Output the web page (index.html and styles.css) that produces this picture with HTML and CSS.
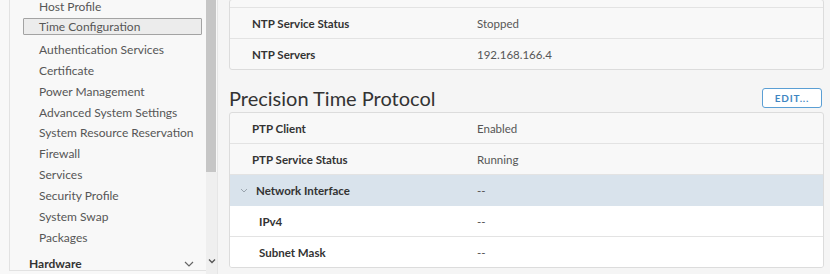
FILE: index.html
```
<!DOCTYPE html>
<html lang="en">
<head>
    <meta charset="UTF-8">
    <meta name="viewport" content="width=device-width, initial-scale=1.0">
    <title>Time Configuration</title>
    <link rel="stylesheet" href="styles.css">
</head>
<body>
    <div class="layout">
        <aside class="sidebar">
            <nav class="tree">
                <ul class="tree-list">
                    <li class="first">Host Profile</li>
                    <li class="selected"><span>Time Configuration</span></li>
                    <li>Authentication Services</li>
                    <li>Certificate</li>
                    <li>Power Management</li>
                    <li>Advanced System Settings</li>
                    <li>System Resource Reservation</li>
                    <li>Firewall</li>
                    <li>Services</li>
                    <li>Security Profile</li>
                    <li>System Swap</li>
                    <li>Packages</li>
                </ul>
                <div class="tree-group">
                    <span>Hardware</span>
                    <svg width="10" height="6" viewBox="0 0 10 6"><path d="M1 1l4 4 4-4" fill="none" stroke="#666" stroke-width="1.2"/></svg>
                </div>
            </nav>
            <div class="scrollbar">
                <div class="thumb"></div>
                <div class="track">
                    <svg width="8" height="6" viewBox="0 0 8 6"><path d="M1 1.5l3 3 3-3" fill="none" stroke="#555" stroke-width="1.3"/></svg>
                </div>
            </div>
        </aside>

        <main class="content">
            <section class="card card-top">
                <div class="row row-cut"></div>
                <div class="row"><span class="label">NTP Service Status</span><span class="value">Stopped</span></div>
                <div class="row"><span class="label">NTP Servers</span><span class="value">192.168.166.4</span></div>
            </section>

            <div class="section-head">
                <h2>Precision Time Protocol</h2>
                <button class="btn-edit">EDIT...</button>
            </div>

            <section class="card">
                <div class="row"><span class="label">PTP Client</span><span class="value">Enabled</span></div>
                <div class="row"><span class="label">PTP Service Status</span><span class="value">Running</span></div>
                <div class="row row-group">
                    <span class="label">
                        <svg class="caret" width="8" height="5" viewBox="0 0 8 5"><path d="M1 1l3 3 3-3" fill="none" stroke="#9aa4ad" stroke-width="1"/></svg>
                        Network Interface
                    </span>
                    <span class="value">--</span>
                </div>
                <div class="row row-sub"><span class="label">IPv4</span><span class="value">--</span></div>
                <div class="row row-sub"><span class="label">Subnet Mask</span><span class="value">--</span></div>
            </section>
        </main>
    </div>
</body>
</html>
```

FILE: styles.css
```
* {
    margin: 0;
    padding: 0;
    box-sizing: border-box;
}
body {
    background-color: #f5f5f5;
    font-family: Lato, "Noto Sans", sans-serif;
    font-size: 11.5px;
    color: #565656;
    overflow: hidden;
}
.layout {
    display: flex;
    height: 274px;
}

/* arbre de gauche */
.sidebar {
    display: flex;
    width: 218px;
    flex-shrink: 0;
    background-color: #f8f8f8;
}
.tree {
    width: 206px;
    border-left: 1px solid #e2e2e2;
    border-bottom: 1px solid #e2e2e2;
    margin-left: 9px;
    height: 271px;
    overflow: hidden;
    font-size: 12px;
}
.tree-list {
    list-style: none;
}
.tree-list li {
    height: 20.9px;
    line-height: 21px;
    padding-left: 29px;
    white-space: nowrap;
}
.tree-list li.first {
    height: 16px;
    line-height: 14px;
}
.tree-list li.selected {
    padding-left: 13px;
    padding-right: 4px;
}
.tree-list li.selected span {
    display: block;
    height: 17px;
    line-height: 15px;
    margin-top: 2px;
    padding-left: 15px;
    background-color: #ececec;
    border: 1px solid #a3a3a3;
    border-radius: 1px;
}
.tree-group {
    display: flex;
    align-items: center;
    justify-content: space-between;
    height: 26px;
    margin-top: 3px;
    padding-left: 19px;
    padding-right: 12px;
    font-weight: 700;
    color: #333;
}
.scrollbar {
    width: 12px;
    display: flex;
    flex-direction: column;
    border-right: 1px solid #e6e6e6;
}
.thumb {
    height: 172px;
    background-color: #c6c6c6;
    margin-right: 1px;
}
.track {
    flex: 1;
    background-color: #efefef;
    display: flex;
    align-items: flex-end;
    justify-content: center;
    padding-bottom: 10px;
}

/* contenu */
.content {
    flex: 1;
    padding: 0 6px 0 11px;
}
.card {
    border: 1px solid #dcdcdc;
    border-radius: 3px;
    background-color: #f8f8f8;
    overflow: hidden;
}
.card-top {
    margin-top: -1px;
}
.row {
    display: flex;
    align-items: center;
    height: 31px;
    border-bottom: 1px solid #e3e3e3;
}
.row:last-child {
    border-bottom: none;
    height: 30px;
}
.row.row-cut {
    height: 8px;
}
.label {
    width: 247px;
    padding-left: 22px;
    font-weight: 700;
    color: #333;
    display: flex;
    align-items: center;
}
.value {
    color: #565656;
}
.row-group {
    background-color: #d9e3ec;
    border-bottom: none;
}
.row-group .label {
    padding-left: 10px;
}
.caret {
    margin-right: 8px;
}
.row-sub {
    background-color: #fff;
}
.row-sub .label {
    padding-left: 29px;
}
.section-head {
    display: flex;
    align-items: center;
    justify-content: space-between;
    padding: 18px 2px 4px 0;
}
.section-head h2 {
    font-size: 20px;
    font-weight: 400;
    color: #333;
    line-height: 20px;
}
.btn-edit {
    height: 20px;
    width: 60px;
    border: 1.5px solid #5b9fd4;
    border-radius: 3px;
    background-color: #fff;
    color: #3f86c2;
    font-family: Lato, "Noto Sans", sans-serif;
    font-weight: 700;
    font-size: 10px;
    letter-spacing: 0.8px;
}
```
